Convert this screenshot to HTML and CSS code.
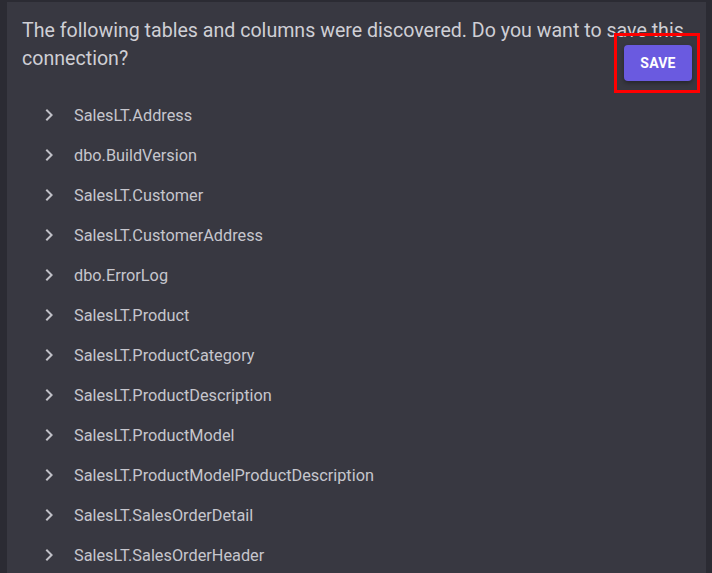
FILE: index.html
```html
<!DOCTYPE html>
<html>
<head>
<meta charset="utf-8">
<link rel="stylesheet" href="styles.css">
</head>
<body>
<div class="panel">
  <p class="intro">The following tables and columns were discovered. Do you want to save this connection?</p>
  <div class="annot">
    <button class="save">SAVE</button>
  </div>
  <ul class="tables">
    <li><svg class="chev" viewBox="0 0 24 24"><path d="M10 6L8.59 7.41 13.17 12l-4.58 4.59L10 18l6-6z"/></svg><span>SalesLT.Address</span></li>
    <li><svg class="chev" viewBox="0 0 24 24"><path d="M10 6L8.59 7.41 13.17 12l-4.58 4.59L10 18l6-6z"/></svg><span>dbo.BuildVersion</span></li>
    <li><svg class="chev" viewBox="0 0 24 24"><path d="M10 6L8.59 7.41 13.17 12l-4.58 4.59L10 18l6-6z"/></svg><span>SalesLT.Customer</span></li>
    <li><svg class="chev" viewBox="0 0 24 24"><path d="M10 6L8.59 7.41 13.17 12l-4.58 4.59L10 18l6-6z"/></svg><span>SalesLT.CustomerAddress</span></li>
    <li><svg class="chev" viewBox="0 0 24 24"><path d="M10 6L8.59 7.41 13.17 12l-4.58 4.59L10 18l6-6z"/></svg><span>dbo.ErrorLog</span></li>
    <li><svg class="chev" viewBox="0 0 24 24"><path d="M10 6L8.59 7.41 13.17 12l-4.58 4.59L10 18l6-6z"/></svg><span>SalesLT.Product</span></li>
    <li><svg class="chev" viewBox="0 0 24 24"><path d="M10 6L8.59 7.41 13.17 12l-4.58 4.59L10 18l6-6z"/></svg><span>SalesLT.ProductCategory</span></li>
    <li><svg class="chev" viewBox="0 0 24 24"><path d="M10 6L8.59 7.41 13.17 12l-4.58 4.59L10 18l6-6z"/></svg><span>SalesLT.ProductDescription</span></li>
    <li><svg class="chev" viewBox="0 0 24 24"><path d="M10 6L8.59 7.41 13.17 12l-4.58 4.59L10 18l6-6z"/></svg><span>SalesLT.ProductModel</span></li>
    <li><svg class="chev" viewBox="0 0 24 24"><path d="M10 6L8.59 7.41 13.17 12l-4.58 4.59L10 18l6-6z"/></svg><span>SalesLT.ProductModelProductDescription</span></li>
    <li><svg class="chev" viewBox="0 0 24 24"><path d="M10 6L8.59 7.41 13.17 12l-4.58 4.59L10 18l6-6z"/></svg><span>SalesLT.SalesOrderDetail</span></li>
    <li><svg class="chev" viewBox="0 0 24 24"><path d="M10 6L8.59 7.41 13.17 12l-4.58 4.59L10 18l6-6z"/></svg><span>SalesLT.SalesOrderHeader</span></li>
  </ul>
</div>
</body>
</html>
```
FILE: styles.css
```css
html, body {
  margin: 0;
  padding: 0;
  height: 100%;
  overflow: hidden;
  background: #2b2b33;
  font-family: Roboto, "Liberation Sans", sans-serif;
}
.panel {
  position: relative;
  margin: 2px 6px 0 7px;
  background: #383841;
  height: 600px;
  padding-top: 15px;
  box-sizing: border-box;
}
.intro {
  margin: 0;
  padding: 0 14px 0 15px;
  font-size: 19.6px;
  line-height: 28px;
  color: #cfcfd5;
}
.annot {
  position: absolute;
  left: 607px;
  top: 31px;
  width: 86px;
  height: 60px;
  border: 3px solid #ff0000;
  box-sizing: border-box;
  display: flex;
  align-items: center;
  justify-content: flex-end;
  padding-right: 5px;
}
.save {
  width: 68px;
  height: 36px;
  border: none;
  border-radius: 4px;
  background: #6a5ae0;
  color: #ffffff;
  font-family: Roboto, "Liberation Sans", sans-serif;
  font-weight: 700;
  font-size: 14px;
  letter-spacing: 0.2px;
  box-shadow: 0 2px 4px rgba(0,0,0,0.35);
  padding: 0;
}
.tables {
  list-style: none;
  margin: 22px 0 0 0;
  padding: 0 0 0 30px;
}
.tables li {
  height: 40px;
  display: flex;
  align-items: center;
  color: #c6c6cd;
  font-size: 16.3px;
}
.chev {
  width: 24px;
  height: 24px;
  fill: #c0c0c7;
  margin-right: 13px;
  flex: none;
}
```
